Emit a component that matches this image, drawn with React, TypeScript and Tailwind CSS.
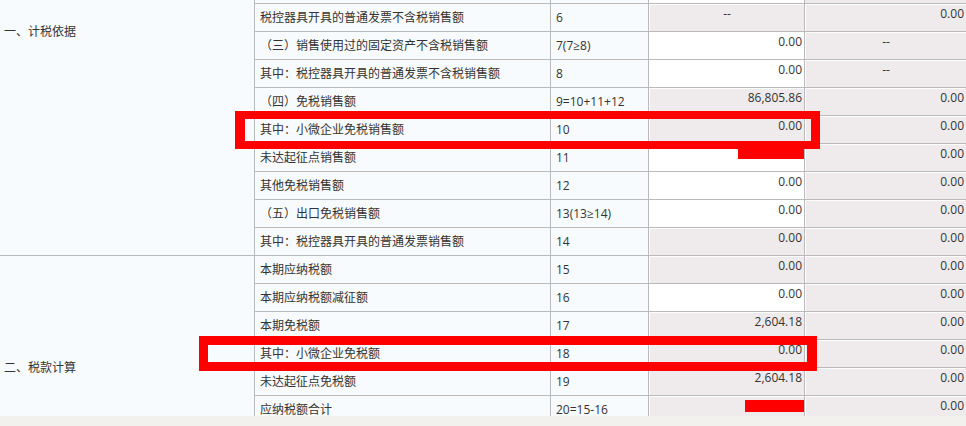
type Cell = { v: string; white?: boolean; center?: boolean };
type Row = { label: string; no: string; a: Cell; b: Cell };

const rowsPart1: Row[] = [
  { label: '税控器具开具的普通发票不含税销售额', no: '6', a: { v: '--', center: true }, b: { v: '0.00' } },
  { label: '（三）销售使用过的固定资产不含税销售额', no: '7(7≥8)', a: { v: '0.00', white: true }, b: { v: '--', center: true } },
  { label: '其中：税控器具开具的普通发票不含税销售额', no: '8', a: { v: '0.00', white: true }, b: { v: '--', center: true } },
  { label: '（四）免税销售额', no: '9=10+11+12', a: { v: '86,805.86' }, b: { v: '0.00' } },
  { label: '其中：小微企业免税销售额', no: '10', a: { v: '0.00' }, b: { v: '0.00' } },
  { label: '未达起征点销售额', no: '11', a: { v: '', white: true }, b: { v: '0.00' } },
  { label: '其他免税销售额', no: '12', a: { v: '0.00', white: true }, b: { v: '0.00' } },
  { label: '（五）出口免税销售额', no: '13(13≥14)', a: { v: '0.00', white: true }, b: { v: '0.00' } },
  { label: '其中：税控器具开具的普通发票销售额', no: '14', a: { v: '0.00' }, b: { v: '0.00' } },
];

const rowsPart2: Row[] = [
  { label: '本期应纳税额', no: '15', a: { v: '0.00' }, b: { v: '0.00' } },
  { label: '本期应纳税额减征额', no: '16', a: { v: '0.00', white: true }, b: { v: '0.00' } },
  { label: '本期免税额', no: '17', a: { v: '2,604.18' }, b: { v: '0.00' } },
  { label: '其中：小微企业免税额', no: '18', a: { v: '0.00' }, b: { v: '0.00' } },
  { label: '未达起征点免税额', no: '19', a: { v: '2,604.18' }, b: { v: '0.00' } },
  { label: '应纳税额合计', no: '20=15-16', a: { v: '' }, b: { v: '0.00' } },
];

function ValueCell({ cell, wide }: { cell: Cell; wide?: boolean }) {
  return (
    <div className={wide ? 'flex-1 h-full' : 'w-[156px] h-full border-r border-[#bababa]'}>
      <div
        className={`h-full border-t border-l border-white flex pt-[1px] leading-[16px] ${
          cell.white ? 'bg-white' : 'bg-[#efebec]'
        } ${cell.center ? 'justify-center' : 'justify-end pr-[2px]'}`}
      >
        {cell.v}
      </div>
    </div>
  );
}

function TableRow({ row }: { row: Row }) {
  return (
    <div className="flex h-[28px] shrink-0 border-b border-[#bababa]">
      <div className="w-[296px] border-r border-[#bababa] flex items-center pl-[5px]">{row.label}</div>
      <div className="w-[98px] border-r border-[#bababa] flex items-center pl-[5px]">{row.no}</div>
      <ValueCell cell={row.a} />
      <ValueCell cell={row.b} wide />
    </div>
  );
}

export default function App() {
  return (
    <div
      className="relative w-[966px] h-[426px] overflow-hidden bg-[#f2f1ee] text-[12px] text-[#333]"
      style={{ fontFamily: '"Open Sans", "Noto Sans CJK SC", sans-serif' }}
    >
      <div className="h-[416px] overflow-hidden bg-[#f7fbfd]">
        <div className="flex">
          {/* 左侧分类列 */}
          <div className="w-[255px] border-r border-[#bababa] flex flex-col">
            <div className="h-[256px] border-b border-[#bababa] pt-[24px] pl-[4px] leading-[16px]">一、计税依据</div>
            <div className="h-[200px] pt-[104px] pl-[4px] leading-[16px]">二、税款计算</div>
          </div>
          <div className="flex-1 flex flex-col">
            {/* 上一行的底边（滚动后只露出边线） */}
            <div className="flex h-[4px] shrink-0 border-b border-[#bababa]">
              <div className="w-[296px] border-r border-[#bababa]" />
              <div className="w-[98px] border-r border-[#bababa]" />
              <div className="w-[156px] border-r border-[#bababa] bg-white" />
              <div className="flex-1 bg-[#efebec]" />
            </div>
            {rowsPart1.map((r) => (
              <TableRow key={r.no} row={r} />
            ))}
            {rowsPart2.map((r) => (
              <TableRow key={r.no} row={r} />
            ))}
          </div>
        </div>
      </div>

      {/* 红色标注 */}
      <div className="absolute left-[235px] top-[111px] w-[585px] h-[38px] border-t-[8px] border-l-[10px] border-r-[9px] border-b-[8px] border-[#ff0000]" />
      <div className="absolute left-[738px] top-[141px] w-[66px] h-[18px] bg-[#ff0000]" />
      <div className="absolute left-[199px] top-[336px] w-[618px] h-[35px] border-[9px] border-r-[10px] border-[#ff0000]" />
      <div className="absolute left-[745px] top-[400px] w-[59px] h-[12px] bg-[#ff0000]" />
    </div>
  );
}
